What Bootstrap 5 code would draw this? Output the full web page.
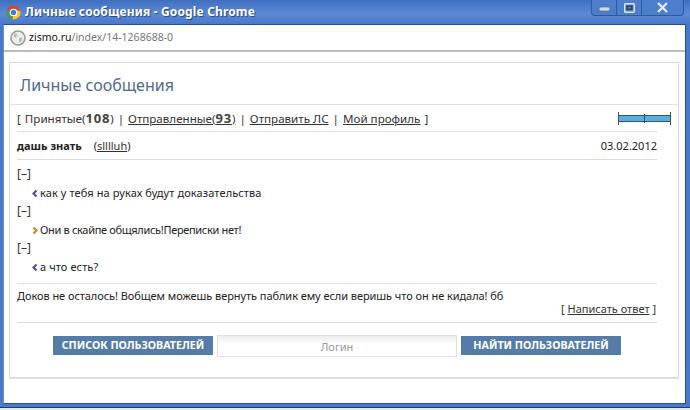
<!DOCTYPE html>
<html lang="ru"><head><meta charset="utf-8"><title>Личные сообщения</title>
<link href="https://cdn.jsdelivr.net/npm/bootstrap@5.3.0/dist/css/bootstrap.min.css" rel="stylesheet">
<style>
html,body{height:100%;margin:0;background:#e8e8e0;overflow:hidden}
body{font-family:"Noto Sans","DejaVu Sans",sans-serif;font-size:11px;color:#222}
.win{width:690px;height:408px;background:linear-gradient(#3f6fc0,#5d8ad6 14px,#4a78c8 24px);border-bottom:1px solid #1c3f80;display:flex;flex-direction:column}
.tbar{height:24px;flex:none;padding:0 4px 0 6px;color:#fff;font-weight:700;font-size:12px;letter-spacing:.15px;text-shadow:1px 1px 1px #24467f}
.tbtns{height:16px;align-self:flex-start;border:1px solid #2c5a9e;border-top:0;border-radius:0 0 4px 4px;background:#4d7ecb;margin-right:2px}
.tbtns span{display:flex;align-items:center;justify-content:center;height:15px;border-right:1px solid #2c5a9e}
.tbtns span:last-child{border-right:0}
.tb-s{width:25px}.tb-l{width:41px}
.inner{flex:1;margin:0 4px 5px 3px;background:#fff;border-top:1px solid #24508f;border-left:1px solid #6f8fc0;border-right:1px solid #24508f;border-bottom:1px solid #274f91;display:flex;flex-direction:column}
.addr{height:27px;flex:none;border-bottom:2px solid #b9b9c0;padding-left:6px;font-size:10.5px;color:#777}
.addr b{font-weight:400;color:#111}
.globe{width:16px;height:16px;margin-right:3px;flex:none}
.cbody{flex:1;padding:10px 6px 24px 5px;background:#fff}
.panel{height:317px;border:1px solid #d9d9dd;border-bottom:2px solid #ddd;background:#fff}
.ttl{height:42px;padding-top:10px;padding-left:10px;font-size:16px;line-height:24px;color:#4f6a8c;border-bottom:1px solid #e2e2e2}
.sect{margin:0 21px 0 7px}
.navr{height:27px;border-bottom:1px solid #ddd;font-size:11.6px;color:#333;padding-top:1px;word-spacing:1px}
.navr a,.subj a,.repl a{color:#333;text-decoration:underline;word-spacing:0}
.navr b{font-size:13px;color:#444;letter-spacing:.8px}
.pbar{width:53px;height:13px;display:block;margin-right:-14px;flex:none}
.subj{height:28px;border-bottom:1px solid #ddd;padding-top:1px}
.subj strong{color:#222;margin-right:9px}
.thread{height:124px;padding-top:6px;border-bottom:1px solid #ddd}
.tree{height:17px;line-height:16px;font-size:12px;color:#333}
.msg{height:20px;line-height:20px;padding-left:15px;color:#222;letter-spacing:.1px}
.msgn{letter-spacing:-.32px}
.arrow{width:8px;height:9px;flex:none}
.reply{height:39px;border-bottom:1px solid #ddd;padding-top:4px;line-height:16px;letter-spacing:-.06px}
.repl{margin-top:-3px;font-size:11px;color:#333;padding-right:1px;text-align:right;line-height:16px;letter-spacing:0}
.foot{padding-top:13px;gap:4px;padding-left:36px}
.ubtn{height:19px;line-height:19px;border:0;border-radius:0;background:#557ca8;color:#fff;font-weight:700;font-size:10.7px;padding:0;text-align:center}
.ub1{width:160px}.ub2{width:160px}
.uinp{width:240px;height:22px;border:1px solid #e8e0da;border-radius:0;background:linear-gradient(#ececec,#fff 8px);font-size:11px;text-align:center;padding:0;color:#888;margin-top:-1px}
.uinp::placeholder{color:#999}
</style></head><body>
<div class="win">
 <div class="tbar d-flex align-items-center">
  <svg width="15" height="15" viewBox="0 0 16 16" class="me-1 flex-shrink-0"><circle cx="8" cy="8" r="7.5" fill="#d8442f"/><path d="M8 8 L1.4 4.6 A7.5 7.5 0 0 0 7 15.4Z" fill="#3ea24a"/><path d="M8 8 L7 15.4 A7.5 7.5 0 0 0 15.4 6.5 L8 5Z" fill="#f3c832"/><circle cx="8" cy="8" r="3.5" fill="#3f7fd8" stroke="#fff" stroke-width="1.2"/></svg>
  <span class="flex-grow-1">Личные сообщения - Google Chrome</span>
  <div class="tbtns d-flex">
   <span class="tb-s"><svg width="13" height="8" viewBox="0 0 13 8"><rect x="1" y="3" width="11" height="4" rx="2" fill="#cfdcf0" stroke="#5a6d8c" stroke-width=".7"/></svg></span>
   <span class="tb-s"><svg width="11" height="10" viewBox="0 0 11 10"><rect x=".7" y=".7" width="9.6" height="8.6" rx="1" fill="none" stroke="#dce6f5" stroke-width="1.4"/><rect x="3" y="3.2" width="5" height="3" fill="none" stroke="#223" stroke-width="1"/></svg></span>
   <span class="tb-l"><svg width="13" height="11" viewBox="0 0 13 11"><path d="M2 1 11 10M11 1 2 10" stroke="#dfe8f5" stroke-width="2.4"/></svg></span>
  </div>
 </div>
 <div class="inner">
  <div class="addr d-flex align-items-center">
   <svg class="globe" viewBox="0 0 16 16"><circle cx="8" cy="8" r="7" fill="#eee" stroke="#999" stroke-width="1.6"/><path d="M4 4c2-1 4 0 3 2S4 8 4 6zM9 8c2-1 4 0 3 2s-2 3-3 2z" fill="#bbb"/></svg>
   <span><b>zismo.ru</b>/index/14-1268688-0</span>
  </div>
  <div class="cbody">
   <div class="panel">
    <div class="ttl">Личные сообщения</div>
    <div class="sect navr d-flex align-items-center justify-content-between">
     <span>[ Принятые(<b>108</b>) | <a href="#">Отправленные(<b>93</b>)</a> | <a href="#">Отправить ЛС</a> | <a href="#">Мой профиль</a> ]</span>
     <svg class="pbar" viewBox="0 0 53 13"><rect x="1" y="4" width="51" height="5" fill="#5aaee0"/><path d="M.5 0v13M52.500 0v13M26.500 2v9M1 3.500h51M1 9.500h51" fill="none" stroke="#2f5a62"/></svg>
    </div>
    <div class="sect subj d-flex align-items-center justify-content-between">
     <span><strong>дашь знать</strong> (<a href="#">slllluh</a>)</span><span>03.02.2012</span>
    </div>
    <div class="sect thread">
     <div class="tree">[–]</div>
     <div class="msg d-flex align-items-center"><svg class="arrow" viewBox="0 0 8 9"><path d="M4.500 1.500 1.500 4.500 4.500 7.500" fill="none" stroke="#5a4f96" stroke-width="2.200"/></svg>как у тебя на руках будут доказательства</div>
     <div class="tree">[–]</div>
     <div class="msg msgn d-flex align-items-center"><svg class="arrow" viewBox="0 0 8 9"><path d="M1.500 1.500 4.500 4.500 1.500 7.500" fill="none" stroke="#c98a2e" stroke-width="2.200"/></svg>Они в скайпе общялись!Переписки нет!</div>
     <div class="tree">[–]</div>
     <div class="msg d-flex align-items-center"><svg class="arrow" viewBox="0 0 8 9"><path d="M4.500 1.500 1.500 4.500 4.500 7.500" fill="none" stroke="#5a4f96" stroke-width="2.200"/></svg>а что есть?</div>
    </div>
    <div class="sect reply">
     <div>Доков не осталось! Вобщем можешь вернуть паблик ему если веришь что он не кидала! бб</div>
     <div class="repl">[ <a href="#">Написать ответ</a> ]</div>
    </div>
    <div class="sect foot d-flex align-items-start">
     <button class="btn ubtn ub1" type="button">СПИСОК ПОЛЬЗОВАТЕЛЕЙ</button>
     <input class="form-control uinp" placeholder="Логин">
     <button class="btn ubtn ub2" type="button">НАЙТИ ПОЛЬЗОВАТЕЛЕЙ</button>
    </div>
   </div>
  </div>
 </div>
</div>
</body></html>
